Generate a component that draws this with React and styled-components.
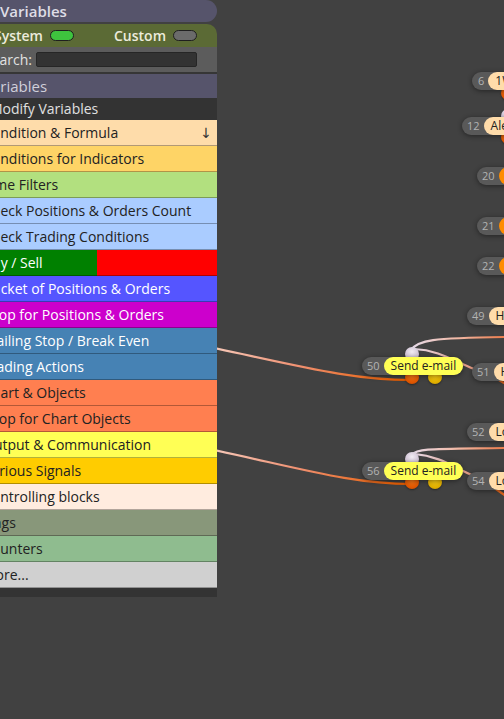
import styled, { createGlobalStyle } from 'styled-components';

const GlobalStyle = createGlobalStyle`
  html, body {
    margin: 0;
    padding: 0;
    background: #414141;
    overflow: hidden;
  }
  body {
    font-family: "Open Sans", "DejaVu Sans", sans-serif;
  }
`;

const Page = styled.div`
  display: flex;
  width: 504px;
  height: 719px;
  overflow: hidden;
  background: #414141;
`;

const Sidebar = styled.aside`
  width: 217px;
  flex: none;
  overflow: hidden;
  align-self: flex-start;
  position: relative;
  z-index: 2;
`;

const Panel = styled.div`
  width: 240px;
  margin-left: -23px;
  display: flex;
  flex-direction: column;
`;

const TitleBar = styled.div`
  height: 22px;
  line-height: 22px;
  padding-left: 23px;
  border-radius: 11px;
  background: #56546b;
  color: #dedde6;
  font-size: 15px;
  font-weight: 600;
`;

const ModeBar = styled.div`
  margin-top: 2px;
  height: 23px;
  display: flex;
  align-items: center;
  padding: 0 20px 0 17px;
  border-radius: 10px 10px 0 0;
  background: #5b6a35;
  color: #ecebdc;
  font-size: 14px;
  font-weight: 600;
`;

const ModeGroup = styled.div`
  display: flex;
  align-items: center;
  gap: 7px;
  margin-left: ${(p) => (p.$right ? 'auto' : '0')};
`;

const Toggle = styled.span`
  width: 22px;
  height: 9px;
  border-radius: 6px;
  border: 1px solid #1f1f1f;
  background: ${(p) => (p.$on ? '#3ec43e' : '#6b6b6b')};
`;

const SearchRow = styled.div`
  height: 25px;
  display: flex;
  align-items: center;
  gap: 4px;
  padding: 0 20px 0 7px;
  background: #5c5c5c;
  color: #e2e2e2;
  font-size: 14px;
`;

const SearchInput = styled.div`
  flex: 1;
  height: 13px;
  background: #333;
  border: 1px solid #262626;
  border-radius: 2px;
`;

const Section = styled.div`
  height: 24px;
  line-height: 24px;
  border-top: 2px solid #363636;
  padding-left: 6px;
  background: #56546b;
  color: #d0cfda;
  font-size: 15px;
`;

const SubItem = styled.div`
  height: 22px;
  line-height: 22px;
  padding-left: 13px;
  background: #333;
  color: #e0e0e0;
  font-size: 14px;
`;

const Row = styled.div`
  height: 25px;
  line-height: 25px;
  display: flex;
  padding: 0 6px;
  border-bottom: 1px solid rgba(0, 0, 0, 0.3);
  background: ${(p) => p.$bg};
  color: ${(p) => (p.$light ? '#fff' : '#222')};
  font-size: 14px;
  white-space: nowrap;
`;

const Arrow = styled.span`
  margin-left: auto;
  margin-right: -1px;
  color: #333;
  font-size: 14px;
`;

const PanelFoot = styled.div`
  height: 9px;
  background: #333;
`;

const Canvas = styled.div`
  position: relative;
  flex: 1;
  height: 719px;
`;

const Wires = styled.svg`
  position: absolute;
  inset: 0;
  width: 100%;
  height: 100%;
`;

const Dot = styled.span`
  position: absolute;
  left: ${(p) => p.$x - 217 - 7}px;
  top: ${(p) => p.$y - 7}px;
  width: 14px;
  height: 14px;
  border-radius: 50%;
  background: ${(p) => p.$bg};
  box-shadow: 0 1px 2px rgba(0, 0, 0, 0.4);
`;

const NodeBox = styled.div`
  position: absolute;
  left: ${(p) => p.$x - 217}px;
  top: ${(p) => p.$y}px;
  height: 18px;
  display: flex;
  align-items: center;
  border-radius: 9px;
  background: #595959;
  box-shadow: 0 1px 5px rgba(0, 0, 0, 0.45);
  white-space: nowrap;
`;

const Num = styled.span`
  padding: 0 4px 0 ${(p) => (p.$single ? 6 : 5)}px;
  color: #b3b3b3;
  font-size: 11px;
  line-height: 18px;
`;

const Label = styled.span`
  height: 18px;
  line-height: 18px;
  padding: 0 7px;
  border-radius: 9px;
  background: ${(p) => p.$bg};
  color: #222;
  font-size: 12px;
`;

const ROWS = [
  { text: 'Condition & Formula', bg: '#fedcaa', arrow: true },
  { text: 'Conditions for Indicators', bg: '#fed466' },
  { text: 'Time Filters', bg: '#b2e07f' },
  { text: 'Check Positions & Orders Count', bg: '#aaccff' },
  { text: 'Check Trading Conditions', bg: '#aaccff' },
  { text: 'Buy / Sell', bg: 'linear-gradient(to right, #008000 50%, #ff0000 50%)', light: true },
  { text: 'Bucket of Positions & Orders', bg: '#5555ff', light: true },
  { text: 'Loop for Positions & Orders', bg: '#cc00cc', light: true },
  { text: 'Trailing Stop / Break Even', bg: '#4682b4', light: true },
  { text: 'Trading Actions', bg: '#4682b4', light: true },
  { text: 'Chart & Objects', bg: '#ff7f50' },
  { text: 'Loop for Chart Objects', bg: '#ff7f50' },
  { text: 'Output & Communication', bg: '#ffff55' },
  { text: 'Various Signals', bg: '#ffcc00' },
  { text: 'Controlling blocks', bg: '#ffecdf' },
  { text: 'Flags', bg: '#88977a' },
  { text: 'Counters', bg: '#8fbc8f' },
  { text: 'More...', bg: '#d0d0d0' },
];

const PEACH = '#ffdcaa';
const YELLOW = '#ffff55';
const ORANGE = '#ff8c00';

const NODES = [
  { id: 6, x: 472, y: 72, label: '1W High', bg: PEACH },
  { id: 12, x: 462, y: 117, label: 'Alert', bg: PEACH },
  { id: 20, x: 477, y: 167, label: 'Condition', bg: ORANGE },
  { id: 21, x: 477, y: 217, label: 'Condition', bg: ORANGE },
  { id: 22, x: 477, y: 257, label: 'Condition', bg: ORANGE },
  { id: 49, x: 467, y: 307, label: 'High', bg: PEACH },
  { id: 50, x: 362, y: 357, label: 'Send e-mail', bg: YELLOW },
  { id: 51, x: 472, y: 363, label: 'High', bg: PEACH },
  { id: 52, x: 467, y: 423, label: 'Low', bg: PEACH },
  { id: 56, x: 362, y: 462, label: 'Send e-mail', bg: YELLOW },
  { id: 54, x: 467, y: 472, label: 'Low', bg: PEACH },
];

const LAVENDER_DOT = 'radial-gradient(circle at 50% 35%, #f2ecf4 0%, #cbbdd0 70%, #a898ae 100%)';
const ORANGE_DOT = 'radial-gradient(circle at 50% 35%, #f47a1c 0%, #e05600 65%, #b84400 100%)';
const GOLD_DOT = 'radial-gradient(circle at 50% 35%, #f6cc1a 0%, #e2b000 65%, #bb8f00 100%)';

const DOTS = [
  { x: 508, y: 93, bg: ORANGE_DOT },
  { x: 508, y: 116, bg: LAVENDER_DOT },
  { x: 508, y: 137, bg: ORANGE_DOT },
  { x: 412, y: 354, bg: LAVENDER_DOT },
  { x: 412, y: 377, bg: ORANGE_DOT },
  { x: 435, y: 377, bg: GOLD_DOT },
  { x: 412, y: 459, bg: LAVENDER_DOT },
  { x: 412, y: 482, bg: ORANGE_DOT },
  { x: 435, y: 482, bg: GOLD_DOT },
];

const Node = ({ id, x, y, label, bg }) => (
  <NodeBox $x={x} $y={y}>
    <Num $single={id < 10}>{id}</Num>
    <Label $bg={bg}>{label}</Label>
  </NodeBox>
);

const App = () => (
  <Page>
    <GlobalStyle />
    <Sidebar>
      <Panel>
        <TitleBar>Variables</TitleBar>
        <ModeBar>
          <ModeGroup>
            System <Toggle $on />
          </ModeGroup>
          <ModeGroup $right>
            Custom <Toggle />
          </ModeGroup>
        </ModeBar>
        <SearchRow>
          Search:
          <SearchInput />
        </SearchRow>
        <Section>Variables</Section>
        <SubItem>Modify Variables</SubItem>
        {ROWS.map((r) => (
          <Row key={r.text} $bg={r.bg} $light={r.light}>
            {r.text}
            {r.arrow && <Arrow>↓</Arrow>}
          </Row>
        ))}
        <PanelFoot />
      </Panel>
    </Sidebar>
    <Canvas>
      <Wires viewBox="217 0 287 719" preserveAspectRatio="none">
        <defs>
          <linearGradient id="inA" gradientUnits="userSpaceOnUse" x1="217" y1="0" x2="400" y2="0">
            <stop offset="0" stopColor="#f6c6b6" />
            <stop offset="0.45" stopColor="#f09070" />
            <stop offset="1" stopColor="#e65c00" />
          </linearGradient>
          <linearGradient id="outA" gradientUnits="userSpaceOnUse" x1="412" y1="0" x2="504" y2="0">
            <stop offset="0" stopColor="#e6dae8" />
            <stop offset="0.5" stopColor="#f2b8a4" />
            <stop offset="1" stopColor="#ec7c4c" />
          </linearGradient>
          <linearGradient id="outB" gradientUnits="userSpaceOnUse" x1="412" y1="0" x2="474" y2="0">
            <stop offset="0" stopColor="#e6dae8" />
            <stop offset="1" stopColor="#e89a80" />
          </linearGradient>
        </defs>
        <g fill="none" strokeWidth="2.2" strokeLinecap="round">
          <path d="M 200 345 C 300 366, 350 380, 412 380" stroke="url(#inA)" />
          <path d="M 200 447 C 300 468, 350 484, 412 484" stroke="url(#inA)" />
          <path d="M 411 350 C 418 340, 432 338, 504 337" stroke="url(#outA)" />
          <path d="M 414 349 C 440 350, 455 362, 474 369" stroke="url(#outB)" />
          <path d="M 411 455 C 418 448, 432 449, 504 448" stroke="url(#outA)" />
          <path d="M 414 454 C 440 456, 455 468, 474 476" stroke="url(#outB)" />
          <path d="M 490 375 C 496 378, 500 381, 506 384" stroke="#e2661e" />
          <path d="M 490 485 C 496 489, 500 492, 506 496" stroke="#e2661e" />
        </g>
      </Wires>
      {DOTS.map((d, i) => (
        <Dot key={i} $x={d.x} $y={d.y} $bg={d.bg} />
      ))}
      {NODES.map((n) => (
        <Node key={n.id} {...n} />
      ))}
    </Canvas>
  </Page>
);

export default App;
